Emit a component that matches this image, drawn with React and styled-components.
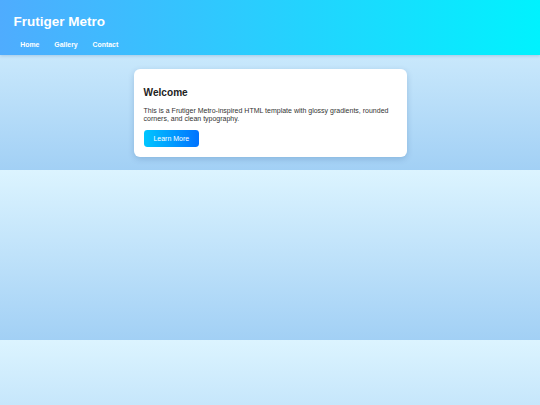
import React from "react";
import styled, { createGlobalStyle } from "styled-components";

const Global = createGlobalStyle`
  html { margin: 0; padding: 0; }
  body {
    margin: 0;
    font-family: "Liberation Sans", Arial, sans-serif;
    background: linear-gradient(to bottom, #dcf4ff, #a2d0f5);
  }
`;

const Header = styled.header`
  box-sizing: border-box;
  height: 55px;
  padding: 13.6px 13.5px 0;
  background: linear-gradient(to right, #4facfe, #00f2fe);
  box-shadow: 0 1px 3px rgba(0, 60, 120, 0.18);
  color: #fff;
  position: relative;
  z-index: 1;
`;

const Title = styled.h1`
  margin: 0;
  font-size: 13.5px;
  line-height: 15.5px;
  font-weight: bold;
`;

const Nav = styled.nav`
  display: flex;
  gap: 1.4px;
  margin-top: 8.4px;
`;

const NavLink = styled.a`
  padding: 3.4px 6.75px;
  font-size: 6.9px;
  line-height: 7.75px;
  font-weight: bold;
  color: #fff;
  text-decoration: none;
`;

const Main = styled.main`
  padding: 13.9px 0 13px;
`;

const Card = styled.section`
  box-sizing: border-box;
  width: 273px;
  margin: 0 auto;
  padding: 10.1px;
  background: #fff;
  border-radius: 6px;
  box-shadow: 0 2px 6px rgba(0, 50, 110, 0.18);
`;

const Heading = styled.h2`
  margin: 8.4px 0 8.4px;
  font-size: 10.1px;
  line-height: 11.6px;
  font-weight: bold;
  color: #222;
`;

const Text = styled.p`
  margin: 0 0 6.75px;
  font-size: 7px;
  line-height: 8px;
  color: #333;
`;

const Button = styled.button`
  display: block;
  height: 16.8px;
  padding: 0 9.8px;
  border: none;
  border-radius: 3.4px;
  background: linear-gradient(to right, #00c6ff, #0072ff);
  color: #fff;
  font-family: inherit;
  font-size: 7px;
  line-height: 8px;
  cursor: pointer;
`;

export default function App() {
  return (
    <>
      <Global />
      <Header>
        <Title>Frutiger Metro</Title>
        <Nav>
          <NavLink href="#">Home</NavLink>
          <NavLink href="#">Gallery</NavLink>
          <NavLink href="#">Contact</NavLink>
        </Nav>
      </Header>
      <Main>
        <Card>
          <Heading>Welcome</Heading>
          <Text>
            This is a Frutiger Metro-inspired HTML template with glossy
            gradients, rounded corners, and clean typography.
          </Text>
          <Button>Learn More</Button>
        </Card>
      </Main>
    </>
  );
}
